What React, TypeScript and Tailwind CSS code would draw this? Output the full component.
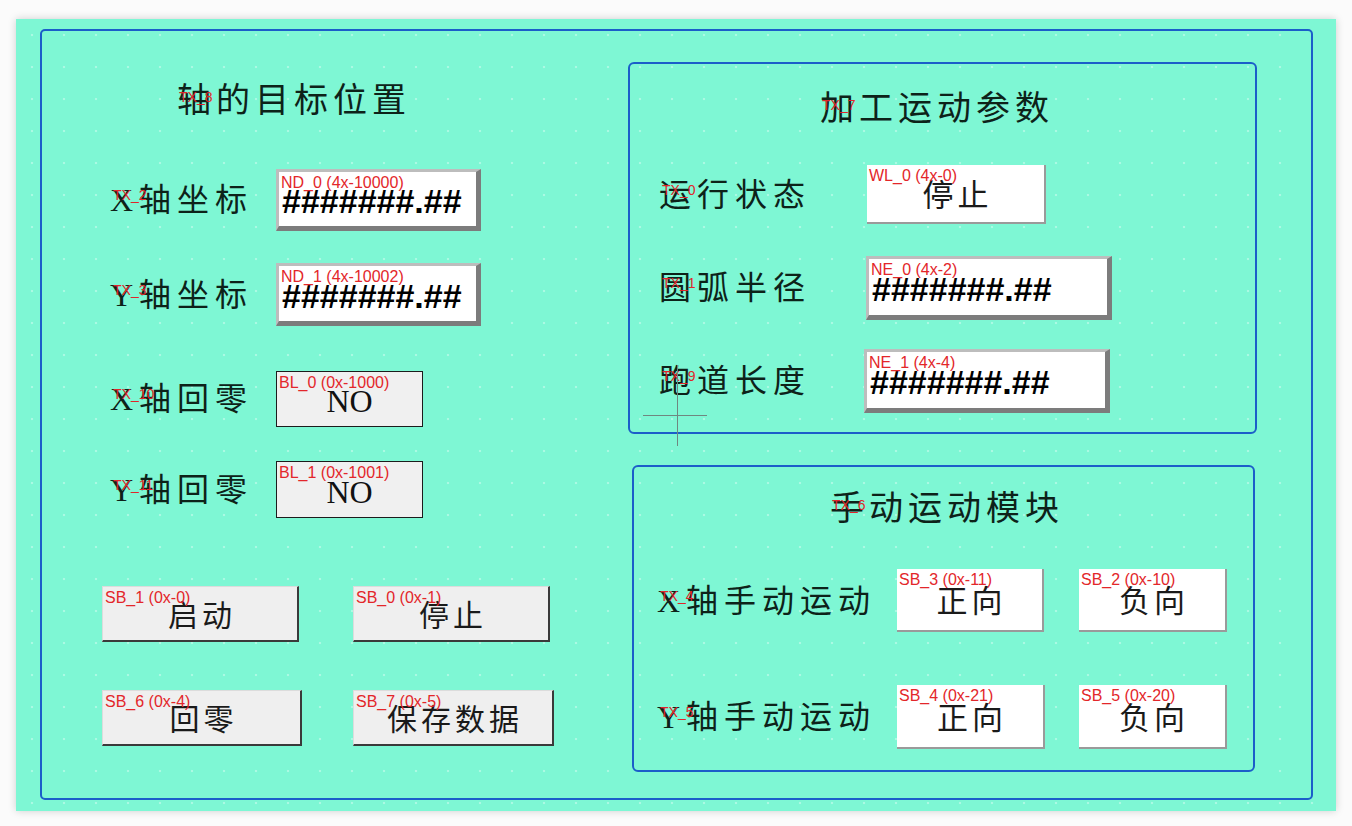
import React from "react";

const serif = "font-['Liberation_Serif','Noto_Sans_CJK_SC',serif]";
const sans = "font-['Liberation_Sans','Noto_Sans_CJK_SC',sans-serif]";

function Label({ text, tag, className }: { text: string; tag: string; className: string }) {
  return (
    <div className={`relative shrink-0 whitespace-nowrap text-[32px] leading-none tracking-[6px] font-normal text-[#0d2219] ${serif} ${className}`}>
      {text}
      <span className={`absolute left-[3px] top-[4px] text-[14px] leading-none tracking-normal font-normal text-[#e0262a] ${sans}`}>
        {tag}
      </span>
    </div>
  );
}

function Title({ text, tag, className }: { text: string; tag: string; className: string }) {
  return (
    <div className={`relative shrink-0 self-start whitespace-nowrap text-[34px] leading-none tracking-[5px] font-normal text-[#0d2219] ${serif} ${className}`}>
      {text}
      <span className={`absolute left-[2px] top-[6px] text-[14px] leading-none tracking-normal font-normal text-[#e0262a] ${sans}`}>
        {tag}
      </span>
    </div>
  );
}

function Tag({ t }: { t: string }) {
  return (
    <span className={`absolute left-[2px] top-[3px] whitespace-nowrap text-[16px] leading-none text-[#e3262a] ${sans}`}>{t}</span>
  );
}

function Field({ tag, className }: { tag: string; className: string }) {
  return (
    <div
      className={`relative shrink-0 flex items-center bg-white border-t-[3px] border-l-[3px] border-r-[5px] border-b-[5px] border-t-[#bdbdbd] border-l-[#bdbdbd] border-r-[#7c7c7c] border-b-[#7c7c7c] ${className}`}
    >
      <span className={`pl-[3px] pt-[4px] text-[34px] leading-none font-bold text-black ${sans}`}>#######.##</span>
      <Tag t={tag} />
    </div>
  );
}

function Bit({ tag, className }: { tag: string; className: string }) {
  return (
    <div className={`relative shrink-0 flex items-center justify-center bg-[#f0f0f0] border border-[#1c1c1c] ${className}`}>
      <span className={`pt-[4px] text-[32px] leading-none text-[#111] ${serif}`}>NO</span>
      <Tag t={tag} />
    </div>
  );
}

function GrayBtn({ tag, text, className }: { tag: string; text: string; className: string }) {
  return (
    <div
      className={`relative shrink-0 flex items-center justify-center bg-[#efefef] border-t border-l border-t-[#dcdcdc] border-l-[#dcdcdc] border-r-2 border-b-2 border-r-[#3a3a3a] border-b-[#3a3a3a] ${className}`}
    >
      <span className={`pt-[4px] pl-[4px] text-[30px] leading-none tracking-[4px] font-normal text-[#1a1a1a] ${serif}`}>{text}</span>
      <Tag t={tag} />
    </div>
  );
}

function WhiteBtn({ tag, text, className }: { tag: string; text: string; className: string }) {
  return (
    <div
      className={`relative shrink-0 flex items-center justify-center bg-white border-r-2 border-b-2 border-r-[#9a9a9a] border-b-[#9a9a9a] ${className}`}
    >
      <span className={`pt-[4px] pl-[4px] text-[31px] leading-none tracking-[4px] font-normal text-[#1a1a1a] ${serif}`}>{text}</span>
      <Tag t={tag} />
    </div>
  );
}

export default function App() {
  return (
    <div className="relative w-[1352px] h-[826px] overflow-hidden bg-[#fbfbfb] pt-[19px] pl-[16px]">
      <div className="w-[1320px] h-[792px] bg-[#7ef7d4] bg-[radial-gradient(circle,rgba(255,255,255,0.35)_1px,transparent_1.6px)] bg-[length:32px_32px] pt-[10px] pl-[24px] shadow-[0_0_8px_rgba(0,0,0,0.18)]">
        <div className="w-[1273px] h-[771px] border-2 border-[#1b5ec9] rounded-[5px] flex">
          {/* Left column */}
          <div className="w-[586px] shrink-0 flex flex-col">
            <Title text="轴的目标位置" tag="TX_8" className="mt-[53px] ml-[135px]" />
            <div className="mt-[51px] flex items-center">
              <Label text="X轴坐标" tag="TX_2" className="ml-[68px] w-[166px]" />
              <Field tag="ND_0 (4x-10000)" className="w-[205px] h-[62px]" />
            </div>
            <div className="mt-[32px] flex items-center">
              <Label text="Y轴坐标" tag="TX_3" className="ml-[68px] w-[166px]" />
              <Field tag="ND_1 (4x-10002)" className="w-[205px] h-[63px]" />
            </div>
            <div className="mt-[45px] flex items-center">
              <Label text="X轴回零" tag="TX_10" className="ml-[68px] w-[166px]" />
              <Bit tag="BL_0 (0x-1000)" className="w-[147px] h-[56px]" />
            </div>
            <div className="mt-[34px] flex items-center">
              <Label text="Y轴回零" tag="TX_11" className="ml-[68px] w-[166px]" />
              <Bit tag="BL_1 (0x-1001)" className="w-[147px] h-[57px]" />
            </div>
            <div className="mt-[68px] ml-[60px] flex gap-[54px]">
              <GrayBtn tag="SB_1 (0x-0)" text="启动" className="w-[197px] h-[56px]" />
              <GrayBtn tag="SB_0 (0x-1)" text="停止" className="w-[197px] h-[56px]" />
            </div>
            <div className="mt-[48px] ml-[60px] flex gap-[51px]">
              <GrayBtn tag="SB_6 (0x-4)" text="回零" className="w-[200px] h-[56px]" />
              <GrayBtn tag="SB_7 (0x-5)" text="保存数据" className="w-[201px] h-[56px]" />
            </div>
          </div>

          {/* Right column */}
          <div className="flex flex-col">
            <div className="mt-[31px] w-[629px] h-[372px] border-2 border-[#1b5ec9] rounded-[6px] flex flex-col">
              <Title text="加工运动参数" tag="TX_7" className="mt-[28px] ml-[190px]" />
              <div className="mt-[39px] flex items-center">
                <Label text="运行状态" tag="TX_0" className="ml-[29px] w-[208px]" />
                <WhiteBtn tag="WL_0 (4x-0)" text="停止" className="w-[179px] h-[59px]" />
              </div>
              <div className="mt-[32px] flex items-center">
                <Label text="圆弧半径" tag="TX_1" className="ml-[29px] w-[207px]" />
                <Field tag="NE_0 (4x-2)" className="w-[246px] h-[64px]" />
              </div>
              <div className="mt-[29px] flex items-center">
                <Label text="跑道长度" tag="TX_9" className="ml-[29px] w-[205px]" />
                <Field tag="NE_1 (4x-4)" className="w-[246px] h-[64px]" />
              </div>
            </div>

            <div className="mt-[31px] ml-[4px] w-[623px] h-[307px] border-2 border-[#1b5ec9] rounded-[6px] flex flex-col">
              <Title text="手动运动模块" tag="TX_6" className="mt-[25px] ml-[196px]" />
              <div className="mt-[43px] flex items-center">
                <Label text="X轴手动运动" tag="TX_4" className="ml-[23px] w-[240px]" />
                <div className="flex gap-[35px]">
                  <WhiteBtn tag="SB_3 (0x-11)" text="正向" className="w-[147px] h-[63px]" />
                  <WhiteBtn tag="SB_2 (0x-10)" text="负向" className="w-[148px] h-[63px]" />
                </div>
              </div>
              <div className="mt-[53px] flex items-center">
                <Label text="Y轴手动运动" tag="TX_5" className="ml-[23px] w-[240px]" />
                <div className="flex gap-[34px]">
                  <WhiteBtn tag="SB_4 (0x-21)" text="正向" className="w-[148px] h-[64px]" />
                  <WhiteBtn tag="SB_5 (0x-20)" text="负向" className="w-[148px] h-[64px]" />
                </div>
              </div>
            </div>
          </div>
        </div>
      </div>

      {/* crosshair cursor overlay */}
      <div className="absolute left-[643px] top-[415px] w-[64px] h-px bg-[#6f8780]" />
      <div className="absolute left-[677px] top-[365px] w-px h-[81px] bg-[#6f8780]" />
    </div>
  );
}
